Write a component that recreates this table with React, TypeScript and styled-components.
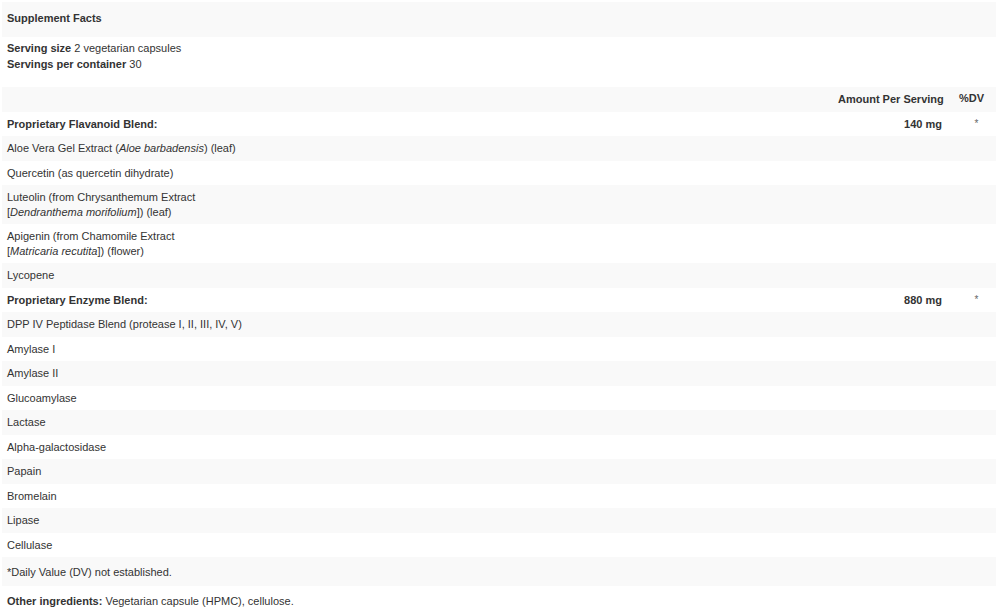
import React from "react";
import styled, { createGlobalStyle } from "styled-components";

const Global = createGlobalStyle`
  html, body { margin: 0; padding: 0; background: #fff; }
  body { font-family: "Liberation Sans", Arial, sans-serif; font-size: 11px; color: #333; }
`;

const Panel = styled.div`
  padding: 2px 4px 0 2px;
`;

const TitleBar = styled.div`
  background: #f9f9f9;
  padding: 9px 5px 11px;
  line-height: 15px;
  font-weight: bold;
`;

const ServingInfo = styled.div`
  padding: 3px 5px 15px;
  line-height: 16px;
`;

const Row = styled.div<{ $striped?: boolean }>`
  display: grid;
  grid-template-columns: 1fr 114px 49px;
  background: ${(p) => (p.$striped ? "#f9f9f9" : "#fff")};
  line-height: 14.5px;
`;

const Cell = styled.div<{ $bold?: boolean }>`
  padding: 5px;
  font-weight: ${(p) => (p.$bold ? "bold" : "normal")};
`;

const AmountCell = styled.div`
  padding: 5px;
  text-align: right;
  font-weight: bold;
  white-space: nowrap;
`;

const DvCell = styled.div<{ $head?: boolean }>`
  padding: ${(p) => (p.$head ? "4px 5px 6px 12px" : "5px 3px 5px 13px")};
  text-align: ${(p) => (p.$head ? "left" : "center")};
  font-weight: ${(p) => (p.$head ? "bold" : "normal")};
  color: ${(p) => (p.$head ? "#333" : "#666")};
  font-size: ${(p) => (p.$head ? "11px" : "10px")};
`;

const Footnote = styled.div`
  background: #f9f9f9;
  padding: 8px 5px 6px;
  line-height: 15px;
`;

const Other = styled.div`
  padding: 8px 5px 0;
  line-height: 14.4px;
`;

type Item = { name: React.ReactNode; bold?: boolean; amount?: string; dv?: string };

const items: Item[] = [
  { name: "Proprietary Flavanoid Blend:", bold: true, amount: "140 mg", dv: "*" },
  { name: <>Aloe Vera Gel Extract (<i>Aloe barbadensis</i>) (leaf)</> },
  { name: "Quercetin (as quercetin dihydrate)" },
  { name: <>Luteolin (from Chrysanthemum Extract<br />[<i>Dendranthema morifolium</i>]) (leaf)</> },
  { name: <>Apigenin (from Chamomile Extract<br />[<i>Matricaria recutita</i>]) (flower)</> },
  { name: "Lycopene" },
  { name: "Proprietary Enzyme Blend:", bold: true, amount: "880 mg", dv: "*" },
  { name: "DPP IV Peptidase Blend (protease I, II, III, IV, V)" },
  { name: "Amylase I" },
  { name: "Amylase II" },
  { name: "Glucoamylase" },
  { name: "Lactase" },
  { name: "Alpha-galactosidase" },
  { name: "Papain" },
  { name: "Bromelain" },
  { name: "Lipase" },
  { name: "Cellulase" },
];

export default function App() {
  return (
    <>
      <Global />
      <Panel>
        <TitleBar>Supplement Facts</TitleBar>
        <ServingInfo>
          <div><b>Serving size</b> 2 vegetarian capsules</div>
          <div><b>Servings per container</b> 30</div>
        </ServingInfo>
        <Row $striped>
          <Cell />
          <AmountCell>Amount Per Serving</AmountCell>
          <DvCell $head>%DV</DvCell>
        </Row>
        {items.map((it, i) => (
          <Row key={i} $striped={i % 2 === 1}>
            <Cell $bold={it.bold}>{it.name}</Cell>
            <AmountCell>{it.amount ?? ""}</AmountCell>
            <DvCell>{it.dv ?? ""}</DvCell>
          </Row>
        ))}
        <Footnote>*Daily Value (DV) not established.</Footnote>
        <Other><b>Other ingredients:</b> Vegetarian capsule (HPMC), cellulose.</Other>
      </Panel>
    </>
  );
}
